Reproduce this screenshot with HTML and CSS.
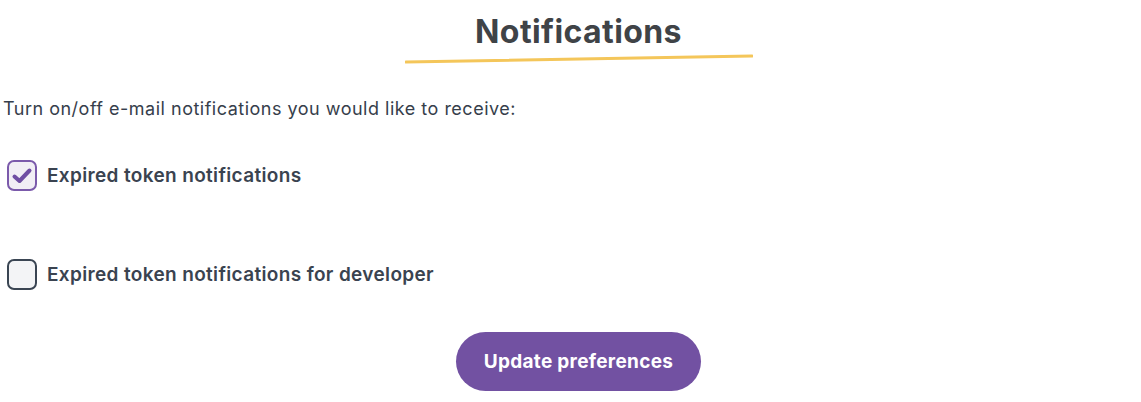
FILE: index.html
```html
<!DOCTYPE html>
<html>
<head>
<meta charset="UTF-8">
<link rel="stylesheet" href="styles.css">
</head>
<body>

    <div class="page">

        <div class="title">
            <h1>Notifications</h1>
            <svg class="underline" width="348" height="10" viewBox="0 0 348 10">
                <path d="M1 8 L347 2" stroke="#f4c65a" stroke-width="3" stroke-linecap="round" fill="none"/>
            </svg>
        </div>

        <p class="intro">Turn on/off e-mail notifications you would like to receive:</p>

        <ul class="options">
            <li>
                <span class="box checked">
                    <svg width="22" height="18" viewBox="0 0 22 18">
                        <path d="M3.5 9.5 L8.5 14 L18.5 3.5" stroke="#6f4ea3" stroke-width="4" stroke-linecap="round" stroke-linejoin="round" fill="none"/>
                    </svg>
                </span>
                <span class="label">Expired token notifications</span>
            </li>
            <li>
                <span class="box"></span>
                <span class="label">Expired token notifications for developer</span>
            </li>
        </ul>

        <div class="actions">
            <button type="button" class="btn">Update preferences</button>
        </div>

    </div>

</body>
</html>
```

FILE: styles.css
```css
body {
    margin: 0;
    background: #fff;
    font-family: 'Inter', 'Open Sans', sans-serif;
    color: #3c4451;
    overflow: hidden;
}

.page {
    padding: 0 0 0 3px;
}

.title {
    display: flex;
    flex-direction: column;
    align-items: center;
    padding: 12px 0 0 13px;
}
.title h1 {
    margin: 0;
    font-size: 32px;
    font-weight: 700;
    letter-spacing: 0.4px;
    line-height: 40px;
    color: #3f4347;
}
.underline {
    display: block;
    margin-top: 2px;
}

.intro {
    margin: 33px 0 0;
    font-size: 18px;
    letter-spacing: 0.5px;
    line-height: 24px;
    color: #363e4b;
}

.options {list-style: none; padding: 0; margin: 39px 0 0 4px;}
.options li {
    display: flex;
    align-items: center;
    gap: 10px;
    height: 31px;
    margin-bottom: 68px;
}
.options li:last-child {margin-bottom: 0;}

.box {
    box-sizing: border-box;
    width: 30px;
    height: 31px;
    border: 2px solid #3a4553;
    border-radius: 7px;
    background: #f3f4f6;
    display: flex;
    align-items: center;
    justify-content: center;
}
.box.checked {
    border-color: #7b5aab;
    background: #f1eef5;
}
.box svg {display: block;}

.label {
    font-size: 19px;
    font-weight: 600;
    letter-spacing: 0.35px;
    color: #3a4350;
}

.actions {
    display: flex;
    justify-content: center;
    padding: 42px 0 0 13px;
}
.btn {
    width: 245px;
    height: 59px;
    border: none;
    border-radius: 30px;
    background: #7251a2;
    color: #fff;
    font-family: 'Inter', 'Open Sans', sans-serif;
    font-size: 19px;
    font-weight: 700;
    letter-spacing: 0.3px;
    cursor: pointer;
}
```
